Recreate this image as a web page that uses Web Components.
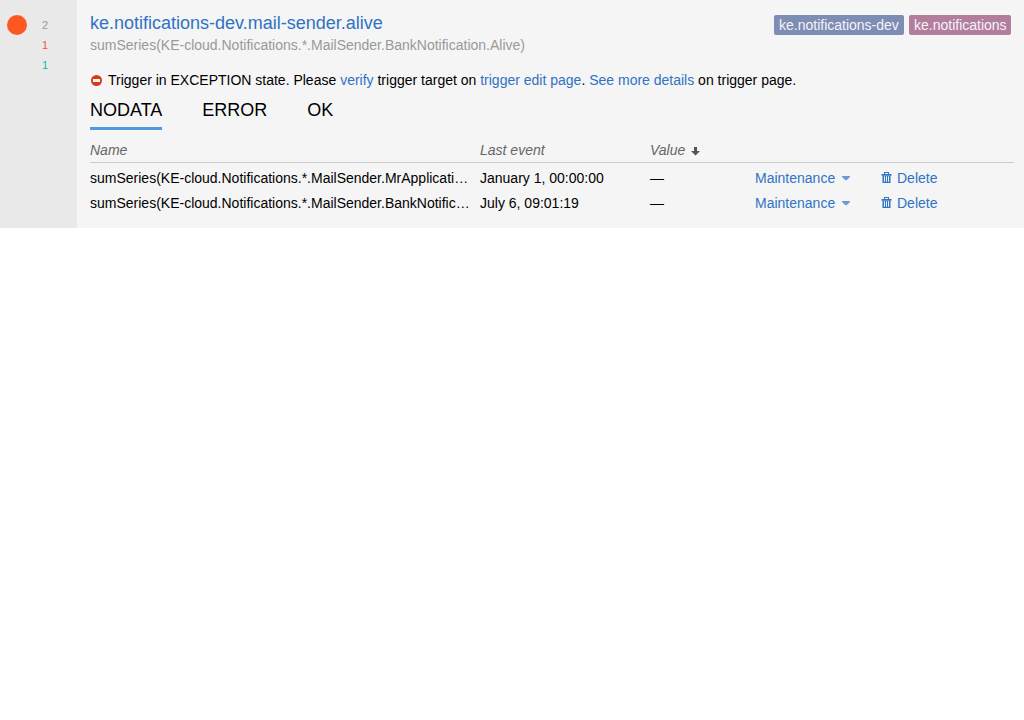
<!DOCTYPE html>
<html lang="en"><head><meta charset="utf-8"><title>Trigger</title>
<style>body{margin:0;background:#fff;font:14px/20px "Liberation Sans",Arial,sans-serif;color:#000}</style></head><body>
<trigger-card></trigger-card>
<script>
const define=(name,html)=>customElements.define(name,class extends HTMLElement{
 constructor(){super();const t=document.createElement('template');t.innerHTML=html;this.attachShadow({mode:'open'}).append(t.content.cloneNode(true));}
});
define('text-link',`<style>:host{color:#3072c4;cursor:pointer}</style><slot></slot>`);
define('tag-label',`<style>:host{display:block;box-sizing:border-box;width:var(--w);height:20px;line-height:20px;padding:0 5px;border-radius:2px;color:#f4f4f8;background:var(--tag);white-space:nowrap}</style><slot></slot>`);
define('status-tab',`<style>:host{display:block;box-sizing:border-box;height:34px;padding-top:3px;font-size:18px;line-height:22px;border-bottom:3px solid transparent}:host([active]){border-color:#5199db}</style><slot></slot>`);
define('status-column',`<style>:host{display:flex;box-sizing:border-box;width:77px;flex:none;background:#e9e9e9}
.dot{width:34px;padding:15px 7px;box-sizing:border-box}.dot i{display:block;width:20px;height:20px;border-radius:50%;background:#ff5722}
.n{width:22px;padding-top:15px;text-align:center;font-size:11px;line-height:20px;color:#999}.n div:nth-child(2){color:#ff5722}.n div:nth-child(3){color:#00bfa5}</style>
<div class="dot"><i></i></div><div class="n"><div>2</div><div>1</div><div>1</div></div>`);
define('metric-row',`<style>:host{display:grid;grid-template-columns:380px 160px 95px 116px 1fr;column-gap:10px;height:25px;line-height:20px}
.name{white-space:nowrap}.m,.d{display:flex;align-items:flex-start}.m svg{margin:8px 0 0 6px}.d svg{margin:4px 5px 0 0}</style>
<div class="name"><slot name="name"></slot></div><div><slot name="time"></slot></div><div>—</div>
<text-link><span class="m">Maintenance<svg width="10" height="5"><path d="M1 0h8v1L5.5 4.2h-1L1 1z" fill="#6c9bd8"/></svg></span></text-link>
<text-link><span class="d"><svg width="11" height="12" viewBox="0 0 11 12" fill="#3072c4"><path fill-rule="evenodd" d="M3 0h5v2h2.5v1.8H.5V2H3zM4 1v1h3V1zM1.5 3.5h8V11h-8zM3 4.2v5.6h1V4.2zm2 0v5.6h1V4.2zm2 0v5.6h1V4.2z"/></svg>Delete</span></text-link>`);
define('metric-table',`<style>:host{display:block;margin-top:10px}.h{display:grid;grid-template-columns:380px 160px 1fr;column-gap:10px;height:22px;border-bottom:1px solid #ccc;font-style:italic;color:#666;margin-bottom:5px}.v{display:flex}.v svg{margin:7px 0 0 6px}</style>
<div class="h"><div>Name</div><div>Last event</div><div class="v">Value<svg width="9" height="9"><path d="M3 0h3v4h3L4.5 8.5 0 4h3z" fill="#555"/></svg></div></div><slot></slot>`);
define('trigger-card',`<style>:host{display:flex;height:228px;background:#f5f5f5}
main{flex:1;min-width:0;padding:12px 10px 0 13px}header{display:flex;justify-content:space-between}h1{margin:0;font-size:18px;font-weight:400;line-height:23px}
.tags{display:flex;gap:5px;padding:3px 3px 0 0}.target{color:#999}.error{display:flex;margin-top:15px}.error svg{margin:5px 6px 0 1px;flex:none}.tabs{display:flex;gap:40px;margin-top:6px}</style>
<status-column></status-column><main><header><div><h1><text-link>ke.notifications-dev.mail-sender.alive</text-link></h1><div class="target">sumSeries(KE-cloud.Notifications.*.MailSender.BankNotification.Alive)</div></div>
<div class="tags"><tag-label style="--w:130px;--tag:#7e8db3">ke.notifications-dev</tag-label><tag-label style="--w:102px;--tag:#b37e9e">ke.notifications</tag-label></div></header>
<div class="error"><svg width="11" height="11"><circle cx="5.5" cy="5.5" r="5.5" fill="#d83a18"/><path d="M2 4h7v3H2z" fill="#fff"/></svg><div>Trigger in EXCEPTION state. Please <text-link>verify</text-link> trigger target on <text-link>trigger edit page</text-link>. <text-link>See more details</text-link> on trigger page.</div></div>
<div class="tabs"><status-tab active>NODATA</status-tab><status-tab>ERROR</status-tab><status-tab>OK</status-tab></div>
<metric-table><metric-row><span slot="name">sumSeries(KE-cloud.Notifications.*.MailSender.MrApplicati…</span><span slot="time">January 1, 00:00:00</span></metric-row><metric-row><span slot="name">sumSeries(KE-cloud.Notifications.*.MailSender.BankNotific…</span><span slot="time">July 6, 09:01:19</span></metric-row></metric-table></main>`);
</script></body></html>
